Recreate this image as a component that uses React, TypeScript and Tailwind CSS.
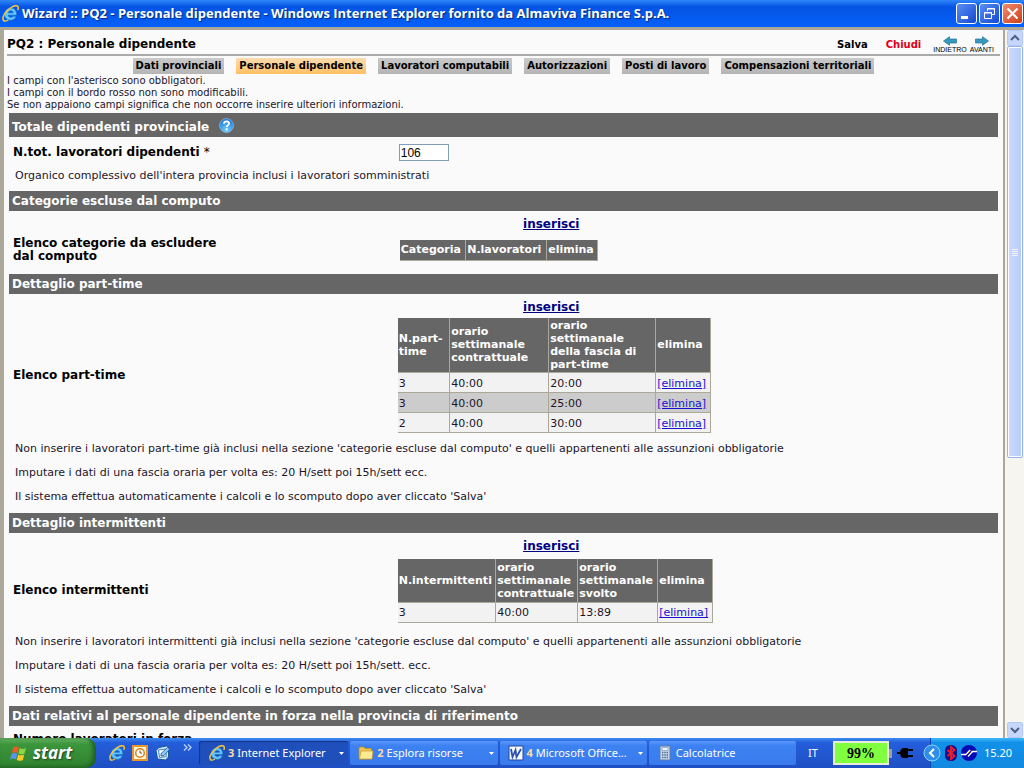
import React from "react";

const tabs = [
  "Dati provinciali",
  "Personale dipendente",
  "Lavoratori computabili",
  "Autorizzazioni",
  "Posti di lavoro",
  "Compensazioni territoriali",
];

function IeLogo({ className }: { className: string }) {
  return (
    <svg viewBox="0 0 16 16" className={className} aria-hidden="true">
      <path
        d="M13.800 9.600H5.800c.2 1.200 1.100 1.900 2.500 1.900 1 0 1.700-.4 2.100-1h3c-.8 2.500-2.700 3.900-5.300 3.900-3.400 0-5.800-2.300-5.800-5.700 0-3.400 2.500-5.900 6-5.900 3.500 0 5.700 2.500 5.500 6.800ZM10.600 7.300C10.400 6.200 9.600 5.500 8.300 5.500 7 5.500 6.100 6.200 5.800 7.300Z"
        fill="#62c6fa"
        stroke="#1668c4"
        strokeWidth=".6"
      />
      <path
        d="M2 15C-.2 13.600 1 9.600 4.400 5.900 8 2 12.600-.3 14.600 1.100c.8.600.9 1.700.4 3.100"
        fill="none"
        stroke="#f0c440"
        strokeWidth="1.500"
        strokeLinecap="round"
      />
      <path d="M2 15c1 .4 2.200 0 3.500-.8" fill="none" stroke="#f0c440" strokeWidth="1.200" strokeLinecap="round" />
    </svg>
  );
}

function HelpIcon() {
  return (
    <svg viewBox="0 0 16 16" className="h-[15px] w-[15px]" aria-hidden="true">
      <defs>
        <radialGradient id="help" cx=".5" cy=".8" r=".75">
          <stop offset="0" stopColor="#6fd0ff" />
          <stop offset="1" stopColor="#1a78d8" />
        </radialGradient>
      </defs>
      <circle cx="8" cy="8" r="7.400" fill="url(#help)" stroke="#a9d3f5" strokeWidth=".6" />
      <path d="M5.300 6.200C5.300 4.300 6.500 3.500 8 3.500s2.700.9 2.700 2.300C10.700 7.600 8.200 7.700 8.200 9.700" fill="none" stroke="#fff" strokeWidth="1.900" />
      <circle cx="8.200" cy="12" r="1.200" fill="#fff" />
    </svg>
  );
}

function Arrow({ flip }: { flip?: boolean }) {
  return (
    <svg viewBox="0 0 14 10" className={flip ? "h-[10px] w-[14px] -scale-x-100" : "h-[10px] w-[14px]"} aria-hidden="true">
      <path d="M.5 3h7V.7L13.500 5 7.500 9.300V7h-7Z" fill="#3799bf" stroke="#24708f" strokeWidth=".7" />
    </svg>
  );
}

function WindowsFlag() {
  return (
    <svg viewBox="0 0 18 17" className="h-[17px] w-[18px]" aria-hidden="true">
      <path d="M3.200 2.600C5.200 1.200 7 1.300 8.900 2.500L7.500 8C5.700 6.900 3.800 6.900 1.800 8.100Z" fill="#ee5a2c" />
      <path d="M9.800 3c1.900 1.200 3.800 1.200 6.200 0l-1.500 5.500c-2.200 1.200-4.200 1.200-6.100.1Z" fill="#8cd63e" />
      <path d="M1.600 9c2-1.200 3.900-1.200 5.700-.1L5.900 14.400C4 13.300 2.200 13.300.1 14.500Z" fill="#5b94f5" />
      <path d="M8.200 9.400c1.900 1.200 3.900 1.200 6.100 0l-1.500 5.500c-2.200 1.200-4.200 1.200-6.100.1Z" fill="#fbc91e" />
    </svg>
  );
}

function TitleBar() {
  const base = "flex h-[21px] w-[21px] items-center justify-center rounded-[3px] border border-white";
  return (
    <header className="flex h-[27px] shrink-0 items-center bg-linear-to-b from-[#2f86fb] via-[#0553e3] via-25% to-[#0561fb] pr-px pl-[2px]">
      <IeLogo className="h-[17px] w-[17px]" />
      <h1 className="ml-[3px] flex-1 truncate font-['Open_Sans','Noto_Sans',sans-serif] text-[13px] font-bold text-white [text-shadow:1px_1px_1px_#06287f]">
        Wizard :: PQ2 - Personale dipendente - Windows Internet Explorer fornito da Almaviva Finance S.p.A.
      </h1>
      <div className="flex gap-[2px]">
        <button aria-label="Riduci a icona" className={`${base} bg-linear-to-br from-[#5b8df4] to-[#1446d0]`}>
          <svg viewBox="0 0 19 19" className="h-[19px] w-[19px]"><path d="M4 12h7v3H4Z" fill="#fff" /></svg>
        </button>
        <button aria-label="Ripristina" className={`${base} bg-linear-to-br from-[#5b8df4] to-[#1446d0]`}>
          <svg viewBox="0 0 19 19" className="h-[19px] w-[19px]" fill="none" stroke="#fff">
            <path d="M7.500 7V4.500h7v6H12M7 5h8" />
            <path d="M4.500 8.500h7v6h-7ZM4 9h8" />
          </svg>
        </button>
        <button aria-label="Chiudi finestra" className={`${base} bg-linear-to-br from-[#f08a6c] to-[#cf3a12]`}>
          <svg viewBox="0 0 19 19" className="h-[19px] w-[19px]"><path d="m4.500 4.500 10 10m0-10-10 10" stroke="#fff" strokeWidth="2.200" /></svg>
        </button>
      </div>
    </header>
  );
}

function SectionBar({ children }: { children: React.ReactNode }) {
  return <h2 className="h-5 truncate bg-[#666] px-[3px] text-[12px] leading-5 font-bold text-white">{children}</h2>;
}

function Notes({ items }: { items: string[] }) {
  return (
    <div className="flex flex-col gap-2 px-[6px] leading-4">
      {items.map((t) => (
        <p key={t}>{t}</p>
      ))}
    </div>
  );
}

function Inserisci() {
  return (
    <div className="ml-[39%] w-[313px] text-center text-[12px] leading-4">
      <a href="#inserisci" className="font-bold text-[#000080] underline">inserisci</a>
    </div>
  );
}

type Col = { label: string; width: string };

function DataTable({ label, cols, rows, headClass }: { label: string; cols: Col[]; rows: string[][]; headClass: string }) {
  return (
    <table aria-label={label} className="table-fixed border-collapse border-r border-b border-[#aca899] leading-[13px]">
      <thead>
        <tr className={`${headClass} bg-[#666] text-left text-white`}>
          {cols.map((c) => (
            <th key={c.label} className={`${c.width} border-l border-[#aca899] px-px py-0 align-middle font-bold first:border-l-0`}>
              {c.label}
            </th>
          ))}
        </tr>
      </thead>
      <tbody>
        {rows.map((r, i) => (
          <tr key={i} className={i % 2 ? "h-5 bg-[#ccc]" : "h-5 bg-[#f2f2f2]"}>
            {r.map((v, j) => (
              <td key={j} className="border-t border-l border-[#aca899] px-px pt-px pb-0 first:border-l-0">{v}</td>
            ))}
            <td className="border-t border-l border-[#aca899] px-px pt-px pb-0">
              <a href="#elimina" className="text-[#1a10d0] underline">[elimina]</a>
            </td>
          </tr>
        ))}
      </tbody>
    </table>
  );
}

function Row({ label, children }: { label: React.ReactNode; children: React.ReactNode }) {
  return (
    <div className="grid grid-cols-[39%_1fr] items-center">
      <div className="px-1 text-[12px] leading-[13px] font-bold text-black">{label}</div>
      <div className="px-[3px]">{children}</div>
    </div>
  );
}

function Page() {
  return (
    <main className="min-w-0 flex-1 overflow-hidden bg-[#fafafa] pr-[3px] pl-[3px]">
      <div className="flex h-[26px] items-center border-b-2 border-[#aaa] pt-1 font-bold">
        <h2 className="flex-1 text-[12px] text-black">PQ2 : Personale dipendente</h2>
        <nav className="flex items-center text-[10px]">
          <a href="#salva" className="mr-[18px] text-black">Salva</a>
          <a href="#chiudi" className="mr-3 text-[#e00018]">Chiudi</a>
          <a href="#indietro" className="flex flex-col items-center font-['Liberation_Sans',sans-serif] text-[7px] font-normal leading-[7px] text-black">
            <Arrow flip />INDIETRO
          </a>
          <a href="#avanti" className="mr-[6px] ml-[3px] flex flex-col items-center font-['Liberation_Sans',sans-serif] text-[7px] font-normal leading-[7px] text-black">
            <Arrow />AVANTI
          </a>
        </nav>
      </div>
      <nav className="mt-[2px] flex justify-center gap-3 text-[10px]">
        {tabs.map((t, i) => (
          <a
            key={t}
            href={`#tab-${i}`}
            className={
              i === 1
                ? "h-4 bg-linear-to-b from-[#fbdcae] to-[#ffbf62] px-[3px] font-bold leading-4 whitespace-nowrap text-black"
                : "h-4 bg-linear-to-b from-[#cacaca] to-[#b5b5b5] px-[3px] font-bold leading-4 whitespace-nowrap text-black"
            }
          >
            {t}
          </a>
        ))}
      </nav>
      <div className="mt-px text-[10px] leading-3">
        <p>I campi con l'asterisco sono obbligatori.</p>
        <p>I campi con il bordo rosso non sono modificabili.</p>
        <p>Se non appaiono campi significa che non occorre inserire ulteriori informazioni.</p>
      </div>

      <div className="mx-[2px] mt-[2px]">
        <h2 className="flex h-6 items-center gap-[10px] bg-[#666] px-[3px] text-[12px] font-bold text-white">
          <span className="pt-1">Totale dipendenti provinciale</span>
          <HelpIcon />
        </h2>
        <div className="mt-[7px]">
          <Row label={<label htmlFor="tot">N.tot. lavoratori dipendenti <span className="font-normal">*</span></label>}>
            <input
              id="tot"
              defaultValue="106"
              className="ml-px block h-[17px] w-[50px] border border-[#7f9db9] bg-white px-px font-['Liberation_Sans',sans-serif] text-[12px] text-black outline-none"
            />
          </Row>
        </div>
        <div className="mt-[7px] mb-[7px]">
          <Notes items={["Organico complessivo dell'intera provincia inclusi i lavoratori somministrati"]} />
        </div>

        <SectionBar>Categorie escluse dal computo</SectionBar>
        <div className="pt-[5px] pb-[10px]">
          <Inserisci />
          <div className="mt-[5px]">
            <Row label={<>Elenco categorie da escludere<br />dal computo</>}>
              <div className="ml-[2px] py-[3px]">
                <DataTable
                  label="Elenco categorie da escludere dal computo"
                  headClass="h-5"
                  cols={[
                    { label: "Categoria", width: "w-[66px]" },
                    { label: "N.lavoratori", width: "w-[81px]" },
                    { label: "elimina", width: "w-[51px]" },
                  ]}
                  rows={[]}
                />
              </div>
            </Row>
          </div>
        </div>

        <SectionBar>Dettaglio part-time</SectionBar>
        <div className="pt-[5px] pb-2">
          <Inserisci />
          <div className="mt-[3px]">
            <Row label="Elenco part-time">
              <DataTable
                label="Elenco part-time"
                headClass="h-[55px]"
                cols={[
                  { label: "N.part-time", width: "w-[52px]" },
                  { label: "orario settimanale contrattuale", width: "w-[99px]" },
                  { label: "orario settimanale della fascia di part-time", width: "w-[107px]" },
                  { label: "elimina", width: "w-[55px]" },
                ]}
                rows={[
                  ["3", "40:00", "20:00"],
                  ["3", "40:00", "25:00"],
                  ["2", "40:00", "30:00"],
                ]}
              />
            </Row>
          </div>
        </div>
        <Notes
          items={[
            "Non inserire i lavoratori part-time già inclusi nella sezione 'categorie escluse dal computo' e quelli appartenenti alle assunzioni obbligatorie",
            "Imputare i dati di una fascia oraria per volta es: 20 H/sett poi 15h/sett ecc.",
            "Il sistema effettua automaticamente i calcoli e lo scomputo dopo aver cliccato 'Salva'",
          ]}
        />

        <div className="mt-2">
          <SectionBar>Dettaglio intermittenti</SectionBar>
        </div>
        <div className="pt-[5px] pb-[11px]">
          <Inserisci />
          <div className="mt-[5px]">
            <Row label="Elenco intermittenti">
              <DataTable
                label="Elenco intermittenti"
                headClass="h-[43px]"
                cols={[
                  { label: "N.intermittenti", width: "w-[98px]" },
                  { label: "orario settimanale contrattuale", width: "w-[82px]" },
                  { label: "orario settimanale svolto", width: "w-[80px]" },
                  { label: "elimina", width: "w-[55px]" },
                ]}
                rows={[["3", "40:00", "13:89"]]}
              />
            </Row>
          </div>
        </div>
        <Notes
          items={[
            "Non inserire i lavoratori intermittenti già inclusi nella sezione 'categorie escluse dal computo' e quelli appartenenti alle assunzioni obbligatorie",
            "Imputare i dati di una fascia oraria per volta es: 20 H/sett poi 15h/sett. ecc.",
            "Il sistema effettua automaticamente i calcoli e lo scomputo dopo aver cliccato 'Salva'",
          ]}
        />
        <div className="mt-2">
          <SectionBar>Dati relativi al personale dipendente in forza nella provincia di riferimento</SectionBar>
        </div>
        <p className="mt-[7px] px-1 text-[12px] leading-[13px] font-bold text-black">Numero lavoratori in forza</p>
      </div>
    </main>
  );
}

function ScrollBar() {
  const btn = "flex h-4 w-4 items-center justify-center rounded-[2px] border border-[#b4c8f6] bg-[#c6d6fd]";
  return (
    <div className="flex w-[21px] shrink-0 flex-col items-center border-l-2 border-[#aca899] bg-[#f6f5f0]">
      <button aria-label="Scorri su" className={btn}>
        <svg viewBox="0 0 10 8" className="h-2 w-[10px]"><path d="m1 6 4-4 4 4" fill="none" stroke="#4d6185" strokeWidth="2" /></svg>
      </button>
      <div className="flex w-full flex-1 flex-col items-center">
        <div className="flex h-[61%] w-4 items-center justify-center rounded-[2px] border border-[#98b4ea] bg-linear-to-r from-[#cbdafe] to-[#b9cbfa] shadow-[inset_0_0_0_1px_#fff]">
          <div className="flex flex-col gap-px">
            <i className="h-px w-[6px] bg-[#eef4fe]" />
            <i className="h-px w-[6px] bg-[#eef4fe]" />
            <i className="h-px w-[6px] bg-[#eef4fe]" />
            <i className="h-px w-[6px] bg-[#eef4fe]" />
          </div>
        </div>
      </div>
      <button aria-label="Scorri giù" className={btn}>
        <svg viewBox="0 0 10 8" className="h-2 w-[10px]"><path d="m1 2 4 4 4-4" fill="none" stroke="#4d6185" strokeWidth="2" /></svg>
      </button>
    </div>
  );
}

function Task({ icon, count, label, active, menu = true }: { icon: React.ReactNode; count?: string; label: string; active?: boolean; menu?: boolean }) {
  return (
    <button
      className={
        active
          ? "flex h-6 min-w-0 flex-1 items-center gap-[3px] rounded-[2px] bg-[#1e4fba] pr-1 pl-[10px] text-white shadow-[inset_1px_1px_1px_#123684]"
          : "flex h-6 min-w-0 flex-1 items-center gap-[3px] rounded-[2px] bg-linear-to-b from-[#5b97fb] via-[#3c81f2] via-20% to-[#3a7bee] pr-1 pl-[8px] text-white"
      }
    >
      {icon}
      {count && <b className="text-[#fbd9a4]">{count}</b>}
      <span className="flex-1 truncate text-left">{label}</span>
      {menu && <svg viewBox="0 0 5 3" className="h-[3px] w-[5px]"><path d="M0 0h5L2.500 3Z" fill="#fff" /></svg>}
    </button>
  );
}

function TaskBar() {
  return (
    <footer className="flex h-[30px] shrink-0 items-center bg-linear-to-b from-[#3f8cf3] via-[#245edb] via-15% to-[#1f4fc4] font-['Noto_Sans',sans-serif] text-[11px]">
      <button className="flex h-full w-24 items-center gap-[5px] rounded-r-[10px] bg-linear-to-b from-[#6cb66a] via-[#3c963c] via-20% to-[#2f8230] pl-[10px] text-white shadow-[inset_-3px_-1px_4px_#1d5d1e]">
        <WindowsFlag />
        <span className="font-['Open_Sans',sans-serif] text-[17px] font-bold italic leading-5 [text-shadow:1px_1px_2px_#1b431b]">start</span>
      </button>
      <div className="ml-[13px] flex items-center gap-[7px]">
        <button aria-label="Internet Explorer" className="flex"><IeLogo className="h-4 w-4" /></button>
        <button aria-label="Outlook" className="flex">
          <svg viewBox="0 0 16 16" className="h-4 w-4">
            <path d="M1 1h14v14H1Z" fill="#fff3d8" stroke="#e8962b" strokeWidth="2" />
            <circle cx="8" cy="8" r="4.300" fill="#fff" stroke="#d9821c" strokeWidth="1.500" />
            <path d="M8 5.500V8h2" fill="none" stroke="#8a4d0c" />
          </svg>
        </button>
        <button aria-label="Mostra desktop" className="flex">
          <svg viewBox="0 0 16 16" className="h-4 w-4">
            <path d="M4 2.500 11.500 1l2 1.500V12l-3 3-8-1L1 5.500Z" fill="#d7ebfc" stroke="#15559c" />
            <path d="m3.500 5 7-1 .8 7.500-6.800 1Z" fill="#fff" stroke="#3c83c8" />
            <path d="m6 8.500 6.500-6 2.500 1.500-6 6.500-3 .5Z" fill="#8ccaf6" stroke="#124d8e" strokeWidth=".8" />
          </svg>
        </button>
      </div>
      <svg viewBox="0 0 9 7" className="mr-[7px] mb-3 ml-3 h-[7px] w-[9px]"><path d="m1 .5 3 3-3 3m4-6 3 3-3 3" fill="none" stroke="#c3dafc" strokeWidth="1.200" /></svg>
      <div className="flex min-w-0 flex-1 gap-[2px]">
        <Task active icon={<IeLogo className="h-4 w-4 shrink-0" />} count="3" label="Internet Explorer" />
        <Task
          icon={
            <svg viewBox="0 0 16 16" className="h-4 w-4 shrink-0">
              <path d="M1 3.500 2 2h4l1 1.500h6.500V14H1Z" fill="#f0c64c" stroke="#b98a18" strokeWidth=".7" />
              <path d="M3 6h12l-1 8H1.500Z" fill="#ffe991" stroke="#c99a28" strokeWidth=".7" />
            </svg>
          }
          count="2"
          label="Esplora risorse"
        />
        <Task
          icon={
            <svg viewBox="0 0 16 16" className="h-4 w-4 shrink-0">
              <path d="M1 1h14v14H1Z" fill="#f4f8ff" stroke="#24469a" />
              <path d="m3 4 1.500 8L7.500 5l1 7L13 4" fill="none" stroke="#2a52a8" strokeWidth="1.800" />
            </svg>
          }
          count="4"
          label="Microsoft Office..."
        />
        <Task
          menu={false}
          icon={
            <svg viewBox="0 0 16 16" className="h-4 w-4 shrink-0">
              <path d="M3 1h10v14H3Z" fill="#c9d8ea" stroke="#5f7da6" />
              <path d="M5 2.500h6v3H5Z" fill="#eef8ff" stroke="#6f93b8" strokeWidth=".6" />
              <path d="M5 7.500h6M5 10h6M5 12.500h6" stroke="#4b688f" strokeWidth="1.300" strokeDasharray="1.400 .9" />
            </svg>
          }
          label="Calcolatrice"
        />
      </div>
      <span className="mr-[15px] ml-3 text-white">IT</span>
      <div className="flex items-center">
        <div className="flex h-6 w-[56px] items-center justify-center border-2 border-[#e7ecd8] bg-[#80ff40] font-['Liberation_Serif',serif] text-[14px] text-black">
          <b>99%</b>
        </div>
        <div className="h-[9px] w-[3px] bg-[#a0a0a0]" />
      </div>
      <svg viewBox="0 0 17 12" className="mr-4 ml-[5px] h-3 w-[17px]" aria-hidden="true">
        <path d="M0 6h4M11 3h5M11 9h5" stroke="#000" strokeWidth="2" />
        <path d="M11 1v10H7C4.500 11 3 9 3 6s1.500-5 4-5Z" />
      </svg>
      <div className="flex h-full items-center gap-[3px] border-l border-[#1042af] bg-linear-to-b from-[#3fbaf6] via-[#1290e8] via-15% to-[#1189e0] pr-3 text-white">
        <button aria-label="Mostra icone nascoste" className="-ml-2 flex">
          <svg viewBox="0 0 18 18" className="h-[18px] w-[18px]">
            <circle cx="9" cy="9" r="8" fill="#2f8fe8" stroke="#8fd0fb" />
            <path d="m11 5-4 4 4 4" fill="none" stroke="#fff" strokeWidth="2" />
          </svg>
        </button>
        <svg viewBox="0 0 14 16" className="h-4 w-[14px]" aria-hidden="true">
          <rect x="1" width="12" height="16" rx="5.500" fill="#11118c" />
          <path d="m3.500 5 7 6L7 14V2l3.500 3-7 6" fill="none" stroke="#f11b2d" strokeWidth="1.800" />
        </svg>
        <svg viewBox="0 0 16 16" className="mr-1 h-4 w-4" aria-hidden="true">
          <circle cx="8" cy="8" r="8" fill="#0808b4" />
          <path d="M0 9.500h5M10.500 6.500H16" fill="none" stroke="#fff" strokeWidth="1.600" />
          <path d="m4.500 9.800 4.500-5M7 11.500l4.500-5" stroke="#fff" strokeWidth="1.200" />
          <path d="m5.500 9.500 4-4" stroke="#ffe32e" strokeWidth=".8" />
        </svg>
        <span>15.20</span>
      </div>
    </footer>
  );
}

export default function App() {
  return (
    <div className="flex h-screen flex-col overflow-hidden bg-[#fafafa] font-['DejaVu_Sans',Verdana,sans-serif] text-[11px] text-[#22152a]">
      <TitleBar />
      <div className="flex min-h-0 flex-1 border-t-[3px] border-l-4 border-[#aca899]">
        <Page />
        <ScrollBar />
      </div>
      <TaskBar />
    </div>
  );
}
